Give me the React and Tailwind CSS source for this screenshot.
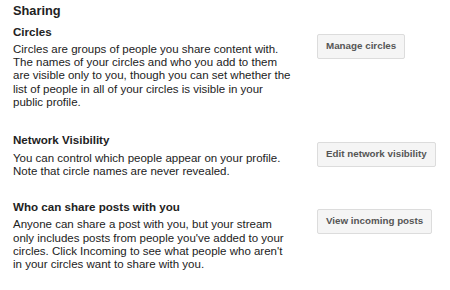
import React from 'react';

const sections = [
  {
    title: 'Circles',
    body: 'Circles are groups of people you share content with. The names of your circles and who you add to them are visible only to you, though you can set whether the list of people in all of your circles is visible in your public profile.',
    button: 'Manage circles',
    top: 'mt-[5.5px]',
    bodyTop: 'mt-[3.7px]',
  },
  {
    title: 'Network Visibility',
    body: 'You can control which people appear on your profile. Note that circle names are never revealed.',
    button: 'Edit network visibility',
    top: 'mt-[23.7px]',
    bodyTop: 'mt-[5px]',
  },
  {
    title: 'Who can share posts with you',
    body: "Anyone can share a post with you, but your stream only includes posts from people you've added to your circles. Click Incoming to see what people who aren't in your circles want to share with you.",
    button: 'View incoming posts',
    top: 'mt-[21px]',
    bodyTop: 'mt-[4.6px]',
  },
];

const App = () => {
  return (
    <div className="w-[450px] h-[290px] bg-white pl-[13px] pt-[1.5px] text-[#222] [font-family:'Liberation_Sans',Arial,sans-serif] overflow-hidden">
      <h2 className="text-[12.8px] leading-[18px] font-bold">Sharing</h2>

      {sections.map((s) => (
        <div key={s.title} className={`flex ${s.top}`}>
          <div className="w-[279px]">
            <h3 className="text-[11.6px] leading-[14px] font-bold">{s.title}</h3>
            <p className={`text-[11.5px] leading-[13.33px] ${s.bodyTop}`}>{s.body}</p>
          </div>
          <div className="pl-[25px]">
            <button
              type="button"
              className="mt-[9px] h-[25px] px-[8px] rounded-[2px] border border-[#dcdcdc] bg-[#f5f5f5] text-[9.8px] font-bold text-[#555] whitespace-nowrap"
            >
              {s.button}
            </button>
          </div>
        </div>
      ))}
    </div>
  );
};

export default App;
